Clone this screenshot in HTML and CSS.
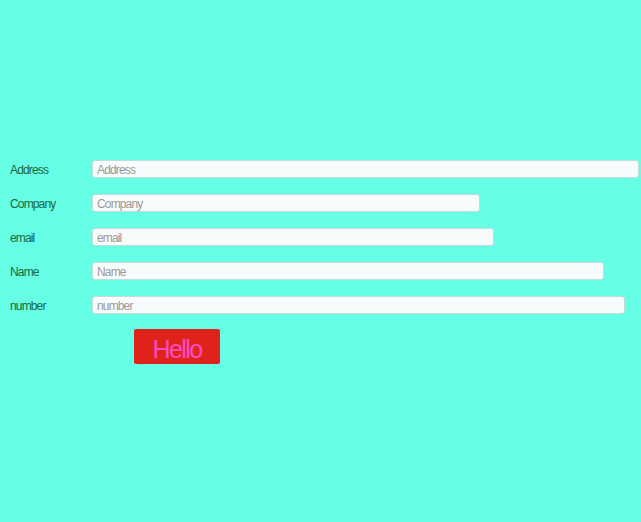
FILE: index.html
```html
<!DOCTYPE html>
<html>
<head>
<meta charset="utf-8">
<link rel="stylesheet" href="styles.css">
</head>
<body>
<form class="form">
  <div class="row"><label class="label">Address</label><input class="field w-address" placeholder="Address"></div>
  <div class="row"><label class="label">Company</label><input class="field w-company" placeholder="Company"></div>
  <div class="row"><label class="label">email</label><input class="field w-email" placeholder="email"></div>
  <div class="row"><label class="label">Name</label><input class="field w-name" placeholder="Name"></div>
  <div class="row"><label class="label">number</label><input class="field w-number" placeholder="number"></div>
  <div class="actions"><button type="button" class="btn">Hello</button></div>
</form>
</body>
</html>
```
FILE: styles.css
```css
html, body {
  margin: 0;
  padding: 0;
  background: #66ffe6;
  height: 100%;
}
body {
  font-family: "Liberation Sans", Arial, sans-serif;
}
.form {
  padding: 160px 0 0 10px;
  display: flex;
  flex-direction: column;
  gap: 16px;
}
.row {
  display: flex;
  align-items: center;
  height: 18px;
}
.label {
  width: 82px;
  padding-top: 2px;
  font-size: 12px;
  color: #17683c;
  letter-spacing: -0.85px;
}
.field {
  box-sizing: border-box;
  height: 18px;
  margin: 0;
  padding: 2px 4px 0;
  border: 1px solid #c3dcd8;
  border-radius: 3px;
  background: #f8fbfb;
  font-family: inherit;
  font-size: 12px;
  letter-spacing: -0.85px;
  color: #333;
  outline: none;
}
.field::placeholder { color: #9a9a9a; }
.w-address { width: 547px; }
.w-company { width: 388px; }
.w-email { width: 402px; }
.w-name { width: 512px; }
.w-number { width: 533px; }
.actions {
  padding-left: 124px;
  margin-top: -1px;
}
.btn {
  box-sizing: border-box;
  width: 86px;
  height: 35px;
  margin: 0;
  padding: 5px 0 0;
  border: none;
  border-radius: 2px;
  background: #e0231a;
  color: #ff4cc4;
  font-family: inherit;
  font-size: 25px;
  letter-spacing: -1.6px;
  line-height: 28px;
  cursor: pointer;
}
```
